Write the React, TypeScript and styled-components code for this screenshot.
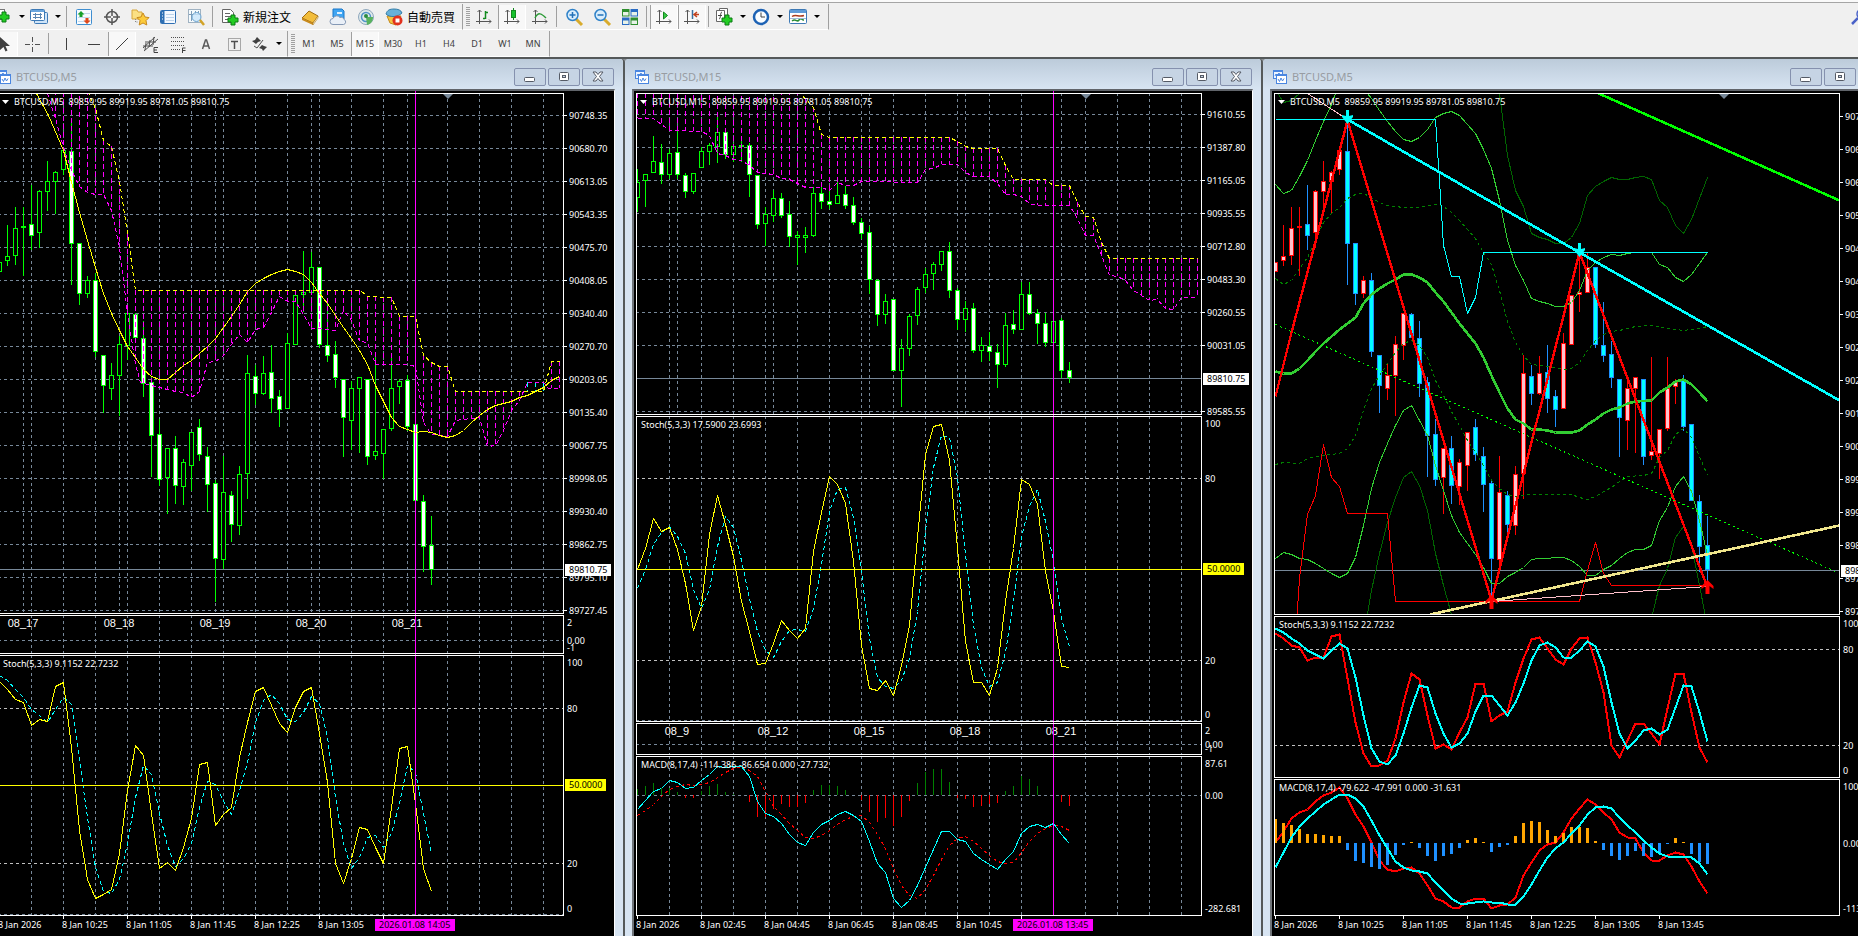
import React from "react";
import styled, { createGlobalStyle } from "styled-components";

/* ---------- shared styling ---------- */

const GlobalStyle = createGlobalStyle`
  *, *::before, *::after { box-sizing: border-box; }
  html, body { margin: 0; height: 100%; overflow: hidden; background: #ababab; }
  body { font-family: "Noto Sans", "Noto Sans CJK JP", sans-serif; }
`;

const C = {
  grid: "#778899",
  level: "#c0c0c0",
  lime: "#00ff00",
  yellow: "#ffff00",
  magenta: "#ff00ff",
  cyan: "#00ffff",
  red: "#ff0000",
  blue: "#1e90ff",
  pink: "#ffc0cb",
  limeGreen: "#32cd32",
  green: "#008000",
  darkGreen: "#006400",
  khaki: "#f0e68c",
  orange: "#ffa500",
};

const Shell = styled.div`
  display: flex;
  flex-direction: column;
  height: 100vh;
  overflow: hidden;
  background: #f0f0f0;
`;

const Toolbars = styled.header`
  display: flex;
  flex: none;
  flex-direction: column;
  gap: 1px;
  padding-top: 2px;
  border-top: 2px solid #fafafa;
  border-bottom: 2px solid #55595a;
  box-shadow: inset 0 1px 0 #a5a5a5;
`;

const Row = styled.div`
  display: flex;
  justify-content: space-between;
  height: 26px;
`;

const Tools = styled.div`
  display: flex;
  align-items: center;
`;

const Bar = styled.div<{ $cut?: number; $padEnd?: number }>`
  display: flex;
  align-items: center;
  height: 26px;
  margin-left: ${(p) => -(p.$cut ?? 0)}px;
  padding-right: ${(p) => p.$padEnd ?? 2}px;
  border-right: 1px solid #a0a0a0;
  border-bottom: 1px solid #fff;
`;

const Grip = styled.span`
  width: 4px;
  height: 20px;
  margin: 0 0 0 3px;
  background: repeating-linear-gradient(#a0a0a0 0 1px, #f0f0f0 1px 2px);
`;

const Sep = styled.span`
  width: 1px;
  height: 21px;
  margin: 0 3px 0 2px;
  background: #a0a0a0;
`;

const Btn = styled.button<{ $on?: boolean; $w?: number }>`
  display: inline-flex;
  align-items: center;
  justify-content: center;
  gap: 4px;
  flex: none;
  width: ${(p) => p.$w ?? 28}px;
  height: 24px;
  padding: 0;
  border: 0;
  background: ${(p) => (p.$on ? "#f8f8f8" : "transparent")};
  box-shadow: ${(p) => (p.$on ? "inset 2px 1px 0 -1px #a0a0a0, inset -2px -1px 0 -1px #fff" : "none")};
  color: #404040;
  font: 9px/12px "Noto Sans", sans-serif;
`;

const WideBtn = styled(Btn)`
  width: auto;
  padding: 0 5px;
  color: #000;
  font: 12px/16px "Noto Sans CJK JP", sans-serif;
`;

const SearchBtn = styled(Btn)`
  margin-right: -16px;
`;

const Icon = styled.svg`
  flex: none;
  width: 18px;
  height: 18px;
  overflow: visible;
`;

const Caret = styled.span`
  width: 0;
  height: 0;
  margin-left: 3px;
  border: 3px solid transparent;
  border-top-color: #000;
  border-bottom: 0;
`;

/* ---------- toolbar icons ---------- */

const Plus = ({ x, y }: { x: number; y: number }) => (
  <path d={`M${x + 3} ${y}h4v3h3v4h-3v3h-4v-3h-3v-4h3z`} fill="#22cc22" stroke="#0a7a14" strokeWidth="1" />
);

const NewChartIcon = () => (
  <Icon viewBox="0 0 18 18">
    <rect x="1.500" y="1.500" width="9" height="10" fill="#fff" stroke="#777" />
    <Plus x={5} y={4} />
  </Icon>
);
const ProfilesIcon = () => (
  <Icon viewBox="0 0 18 18">
    <rect x="4.500" y="4.500" width="13" height="11" rx="1" fill="#cfe4f8" stroke="#3d79b5" />
    <rect x="0.500" y="1.500" width="14" height="11" rx="1" fill="#fff" stroke="#3d79b5" />
    <path d="M1 2h13v2H1z" fill="#6aa5dd" />
    <path d="M3 9.500h9M5.500 5v6M10.500 5v6M3 6.500h9" stroke="#5b86b3" fill="none" />
  </Icon>
);
const MarketIcon = () => (
  <Icon viewBox="0 0 18 18">
    <rect x="1.500" y="1.500" width="15" height="15" rx="1" fill="#f6fbff" stroke="#3f8ed0" />
    <path d="M3 5.500h12M3 9.500h12M3 13.500h12" stroke="#c3d9ec" />
    <path d="M6 3l3.500 3.500H7.500V9h-3V6.500H2.500z" fill="#16a02a" />
    <path d="M12 16l3.500-3.500H13.500V10h-3v2.500H8.500z" fill="#e0481a" />
  </Icon>
);
const DataIcon = () => (
  <Icon viewBox="0 0 18 18">
    <circle cx="9" cy="9" r="5.500" fill="none" stroke="#555" strokeWidth="1.500" />
    <path d="M9 1v7M9 10v7M1 9h7M10 9h7" stroke="#555" strokeWidth="1.500" />
  </Icon>
);
const StarFolderIcon = () => (
  <Icon viewBox="0 0 18 18">
    <path d="M1 2h5l1 2h4v7H1z" fill="#fbe083" stroke="#d7a63c" />
    <path d="M4.500 11v3h3" stroke="#888" fill="none" strokeDasharray="1 1" />
    <path d="M12 5l2 4 4 .6-3 3 .8 4.400L12 15l-3.800 2 .8-4.400-3-3L10 9z" fill="#fccb3c" stroke="#c88a1d" />
  </Icon>
);
const NavigatorIcon = () => (
  <Icon viewBox="0 0 18 18">
    <rect x="1.500" y="2.500" width="15" height="13" rx="1" fill="#f4f9ff" stroke="#2e6fb3" />
    <path d="M2 3h3.500v12H2z" fill="#2e6fb3" />
    <path d="M3 5h1M3 8h1M3 11h1" stroke="#fff" />
    <path d="M7 6.500h8M7 9.500h8M7 12.500h8" stroke="#bcd3ea" />
  </Icon>
);
const TesterIcon = () => (
  <Icon viewBox="0 0 18 18">
    <rect x="1.500" y="1.500" width="12" height="13" fill="#f5fafd" stroke="#9fb2c2" />
    <path d="M4.500 3v10M8.500 3v4M11.500 3v4M2 6.500h11" stroke="#7e9cb8" />
    <circle cx="9.500" cy="9" r="4.500" fill="#cbe6fb" fillOpacity="0.800" stroke="#6ba3cf" />
    <path d="M13 12l4 5" stroke="#d2a327" strokeWidth="2.500" />
  </Icon>
);
const OrderIcon = () => (
  <Icon viewBox="0 0 18 18">
    <path d="M1.500 1.500h8l3 3v10h-11z" fill="#fff" stroke="#666" />
    <path d="M4 5.500h5M4 8.500h6M4 11.500h4" stroke="#666" />
    <Plus x={7} y={7} />
  </Icon>
);
const BookIcon = () => (
  <Icon viewBox="0 0 18 18">
    <path d="M8 3l9 5-5 7L1 10z" fill="#f2bd3b" stroke="#a06c12" />
    <path d="M1 10l11 5v2L1 12z" fill="#c98a1b" />
    <path d="M12 15l5-7v2l-5 7z" fill="#fff2c4" stroke="#a06c12" strokeWidth="0.500" />
  </Icon>
);
const HostingIcon = () => (
  <Icon viewBox="0 0 18 18">
    <path d="M4 1h9l2 2v8H6l-2-2z" fill="#3fa5f3" stroke="#1a76c7" />
    <path d="M8 4h5v2H8z" fill="#dff1ff" />
    <path d="M4 16.500a3 3 0 0 1 0-6 4 4 0 0 1 7-1 3 3 0 0 1 4 2 2.600 2.600 0 0 1-.5 5z" fill="#e9eff7" stroke="#8498b5" />
  </Icon>
);
const SignalIcon = () => (
  <Icon viewBox="0 0 18 18">
    <circle cx="9" cy="9" r="7.500" fill="#dfe9ea" stroke="#8fa8bd" />
    <circle cx="9" cy="9" r="4.500" fill="none" stroke="#4f94c8" strokeWidth="1.500" />
    <path d="M9 9l1 8c4-1 6-4 6-8" fill="#58b25f" />
    <circle cx="9" cy="8" r="2" fill="#2b8c41" />
  </Icon>
);
const AutoIcon = () => (
  <Icon viewBox="0 0 18 18">
    <path d="M2 8l3 7 6 2 5-9z" fill="#f5c443" stroke="#c4891b" />
    <path d="M1 6c1-4 4-5 8-5s7 1 8 4c-4 4-12 5-16 1z" fill="#66b1da" stroke="#367ea8" />
    <circle cx="12.500" cy="12.500" r="5" fill="#e2311d" />
    <path d="M10.500 10.500h4v4h-4z" fill="#fff" />
  </Icon>
);
const Axes = () => <path d="M4.500 2v14M1 13.500h15M2.500 4l2-2 2 2M14 11.500l2 2-2 2" stroke="#555" fill="none" />;
const BarsIcon = () => (
  <Icon viewBox="0 0 18 18">
    <Axes />
    <path d="M10.500 3v8M10 10.500H8M11 4.500h2" stroke="#128a1e" strokeWidth="1.500" />
  </Icon>
);
const CandleIcon = () => (
  <Icon viewBox="0 0 18 18">
    <Axes />
    <path d="M10.500 0v12" stroke="#128a1e" />
    <rect x="8.500" y="2.500" width="4" height="7" fill="#16c22c" stroke="#128a1e" />
  </Icon>
);
const LineIcon = () => (
  <Icon viewBox="0 0 18 18">
    <Axes />
    <path d="M4 10c3-6 6-5 11 0" stroke="#2a9a35" fill="none" strokeWidth="1.500" />
  </Icon>
);
const Lens = ({ plus }: { plus?: boolean }) => (
  <Icon viewBox="0 0 18 18">
    <path d="M11 11l6 6" stroke="#d8ab2c" strokeWidth="3" />
    <circle cx="7.500" cy="7" r="5.500" fill="#d8edfc" stroke="#2f82c9" strokeWidth="1.500" />
    <path d={plus ? "M4.500 7h6M7.500 4v6" : "M4.500 7h6"} stroke="#2271b8" strokeWidth="1.500" />
  </Icon>
);
const SearchIcon = () => (
  <Icon viewBox="0 0 18 18">
    <path d="M1 17l6-6" stroke="#4a62c8" strokeWidth="2.500" />
    <circle cx="11" cy="7" r="5" fill="#eef3ff" stroke="#4a62c8" strokeWidth="1.500" />
  </Icon>
);
const TileIcon = () => (
  <Icon viewBox="0 0 18 18">
    <path d="M1 1h7.500v7.500H1zM9.500 9.500H17V17H9.500z" fill="#2f8f2f" />
    <path d="M9.500 1H17v7.500H9.500zM1 9.500h7.500V17H1z" fill="#2a6cc4" />
    <path d="M2 4h5.500v3.500H2zM10.500 4H16v3.500h-5.500zM2 12.500h5.500V16H2zM10.500 12.500H16V16h-5.500z" fill="#e8f2e8" />
  </Icon>
);
const ScrollIcon = () => (
  <Icon viewBox="0 0 18 18">
    <Axes />
    <path d="M8.500 4v7l4-3.500z" fill="#35c843" stroke="#128a1e" />
  </Icon>
);
const ShiftIcon = () => (
  <Icon viewBox="0 0 18 18">
    <Axes />
    <path d="M9.500 2v9" stroke="#3a6f9f" strokeWidth="1.500" />
    <path d="M16 6.500h-4M14 4l-3 2.500 3 2.500" stroke="#c2401c" fill="none" strokeWidth="1.500" />
  </Icon>
);
const IndicatorIcon = () => (
  <Icon viewBox="0 0 18 18">
    <path d="M4.500 0.500h8v10h-8z" fill="#fff" stroke="#666" />
    <path d="M1.500 2.500h8v11h-8z" fill="#fff" stroke="#666" />
    <path d="M7 4c-2 0-1 7-3 7M3 7.500h4" stroke="#444" fill="none" />
    <Plus x={7} y={7} />
  </Icon>
);
const ClockIcon = () => (
  <Icon viewBox="0 0 18 18">
    <circle cx="9" cy="9" r="7" fill="#fafdff" stroke="#1d62b4" strokeWidth="2.500" />
    <path d="M9 4.500V9h4" stroke="#444" fill="none" />
  </Icon>
);
const TemplateIcon = () => (
  <Icon viewBox="0 0 18 18">
    <rect x="0.500" y="1.500" width="17" height="14" rx="1" fill="#fff" stroke="#3d79b5" />
    <path d="M1 2h16v3H1z" fill="#5d9bd8" />
    <path d="M3 8.500c4-3 6 1 12-1" stroke="#a93c20" fill="none" strokeWidth="1.500" />
    <path d="M3 13c4-3 5 2 7-1s3 0 5 0" stroke="#2a8d35" fill="none" strokeWidth="1.500" />
    <path d="M1 10.500h16" stroke="#9dbada" />
  </Icon>
);
const CursorIcon = () => (
  <Icon viewBox="0 0 18 18">
    <path d="M5 2v13l3.500-3 2 4.500 2-1-2-4.500H15z" fill="#404040" />
  </Icon>
);
const CrossIcon = () => (
  <Icon viewBox="0 0 18 18">
    <path d="M9.500 2v5M9.500 12v5M2 9.500h5M12 9.500h5M9 9.500h1" stroke="#505050" />
  </Icon>
);
const ShapeIcon = ({ d }: { d: string }) => (
  <Icon viewBox="0 0 18 18">
    <path d={d} stroke="#404040" fill="none" />
  </Icon>
);
const ChannelIcon = () => (
  <Icon viewBox="0 0 18 18">
    <path d="M2 13L14 2M3 16L17 4M5 8l-1 7M9 5l-1 7M13 2l-1 8M2 11h10M4 7h11" stroke="#505050" fill="none" />
    <path d="M17 12.500h-4v5h4M13 15h3" stroke="#404040" fill="none" />
  </Icon>
);
const FiboIcon = () => (
  <Icon viewBox="0 0 18 18">
    <path d="M2 2.500h14M2 6.500h14M2 10.500h14M2 14.500h9" stroke="#505050" strokeDasharray="1 1" />
    <path d="M16.500 13h-3v5M14 15.500h2.500" stroke="#404040" fill="none" />
  </Icon>
);
const TextIcon = () => (
  <Icon viewBox="0 0 18 18">
    <path d="M5.500 14l3-9h1l3 9M6.500 11h5" stroke="#5a5a5a" strokeWidth="1.500" fill="none" />
  </Icon>
);
const LabelIcon = () => (
  <Icon viewBox="0 0 18 18">
    <rect x="3.500" y="3.500" width="12" height="12" fill="none" stroke="#606060" strokeDasharray="1 1" />
    <path d="M6 6.500h7M9.500 6v8" stroke="#505050" strokeWidth="1.500" />
  </Icon>
);
const ArrowsIcon = () => (
  <Icon viewBox="0 0 18 18">
    <path d="M6 2l4 4-3 1-2 2-4-3 3-1zM12 16l4-4-3-1-2-1-3 3 3 1z" fill="#404040" />
    <path d="M3 11l3 2 6-8" stroke="#505050" fill="none" />
  </Icon>
);

/* ---------- chart windows ---------- */

const Desktop = styled.main`
  display: flex;
  flex: 1;
  min-height: 0;
  margin-left: -13px;
  overflow: hidden;
  background: #8a8f94;
`;

const Win = styled.section`
  display: flex;
  flex-direction: column;
  flex: 0 0 638px;
  border-right: 2px solid #55595a;
  border-radius: 4px 4px 0 0;
  background: #d7e4f2;
`;

const TitleBar = styled.div`
  display: flex;
  flex: none;
  align-items: center;
  height: 30px;
  padding: 8px 9px 2px 10px;
  border-radius: 4px 4px 0 0;
  background: linear-gradient(#bccbda, #d7e4f2);
`;

const Title = styled.h2`
  flex: 1;
  margin: 0 0 0 5px;
  color: #989ca2;
  font: 11px/16px "Noto Sans", sans-serif;
`;

const WinButtons = styled.div`
  display: flex;
  gap: 2px;
`;

const WinBtn = styled.button`
  display: flex;
  align-items: center;
  justify-content: center;
  width: 32px;
  height: 18px;
  padding: 0;
  border: 1px solid #8591ae;
  border-radius: 2px;
  background: #c6d4e4;
`;

const Client = styled.div`
  display: flex;
  flex-direction: column;
  flex: 1;
  margin: 0 8px 0 7px;
  border-top: 2px solid #60646a;
  border-left: 2px solid #70757a;
  border-right: 1px solid #fff;
  background: #000;
`;

const Svg = styled.svg`
  display: block;
  flex: none;
  font: 9px "Noto Sans", sans-serif;
  fill: #fff;
`;

const HourText = styled.text`
  font: 11px "Liberation Sans", sans-serif;
`;

const LEFT = -4;
const WIDTH = 618;
const PLOT_L = -2;
const PLOT_R = 563;
const STEP = 8;
const bar = (i: number) => i * STEP - 1;

type Pt = [number, number];
type Scale = { y0: number; k: number };
type Candle = [number, number, number, number, number];

const toPoints = (pts: Pt[]) => pts.map(([x, y]) => `${x + 0.5},${Math.round(y) + 0.5}`).join(" ");
const ofIndex = (pts: Pt[], s: Scale = { y0: 0, k: 1 }): Pt[] => pts.map(([i, v]) => [bar(i), s.y0 + v / s.k]);
const ofValues = (v: number[], s: Scale): Pt[] => v.map((n, i) => [bar(i), s.y0 + n / s.k]);

const yAt = (pts: Pt[], x: number) => {
  for (let n = 1; n < pts.length; n++) {
    const [x0, y0] = pts[n - 1];
    const [x1, y1] = pts[n];
    if (x >= x0 && x <= x1) return y0 + ((y1 - y0) * (x - x0)) / (x1 - x0);
  }
  return null;
};

type LineProps = { pts: Pt[]; color: string; dash?: string; w?: number };
const Line = ({ pts, color, dash, w = 1 }: LineProps) => (
  <polyline
    points={toPoints(pts)}
    fill="none"
    stroke={color}
    strokeWidth={w}
    strokeDasharray={dash}
    strokeLinejoin="round"
    shapeRendering="crispEdges"
  />
);

const VLine = ({ x, top, bottom, color = C.grid, dash = "3 3", w = 1 }: any) => (
  <path d={`M${x + 0.5} ${top}V${bottom}`} stroke={color} strokeDasharray={dash} strokeWidth={w} shapeRendering="crispEdges" />
);
const HLine = ({ y, color = C.grid, dash = "3 3" }: { y: number; color?: string; dash?: string }) => (
  <path d={`M${PLOT_L} ${y + 0.5}H${PLOT_R}`} stroke={color} strokeDasharray={dash} shapeRendering="crispEdges" />
);

const gridX = Array.from({ length: 17 }, (_, n) => 31 + n * 32);

type Label = { y: number; text: string; near?: boolean };
type PaneProps = {
  id: string;
  y: number;
  h: number;
  top: number;
  bottom: number;
  grid?: boolean;
  cursor?: boolean;
  labels: Label[];
  title?: string;
  flag?: { y: number; text: string; color: string };
  children?: React.ReactNode;
};

const Pane = ({ id, y, h, top, bottom, grid, cursor, labels, title, flag, children }: PaneProps) => (
  <Svg width={WIDTH} height={h} viewBox={`${LEFT} ${y} ${WIDTH} ${h}`} role="img" aria-label={title ?? id}>
    <defs>
      <clipPath id={id}>
        <rect x={PLOT_L} y={top} width={PLOT_R - PLOT_L} height={bottom - top} />
      </clipPath>
    </defs>
    <g clipPath={`url(#${id})`}>
      {grid && gridX.map((x) => <VLine key={x} x={x} top={top} bottom={bottom} />)}
      {children}
    </g>
    {cursor && <VLine x={415} top={y} bottom={y + h} color={C.magenta} dash="none" />}
    <rect
      x={PLOT_L + 0.5}
      y={top + 0.5}
      width={PLOT_R - PLOT_L}
      height={bottom - top}
      fill="none"
      stroke="#fff"
      shapeRendering="crispEdges"
    />
    {labels.map((l) => (
      <g key={l.text + l.y}>
        {!l.near && <path d={`M563 ${l.y + 0.5}h4`} stroke="#fff" />}
        <text x={l.near ? 567 : 569} y={l.y + 4}>
          {l.text}
        </text>
      </g>
    ))}
    {flag && (
      <g>
        <rect x="565" y={flag.y - 6} width={flag.color === "#fff" ? 46 : 41} height="12" fill={flag.color} />
        <text x="569" y={flag.y + 3} fill="#000">
          {flag.text}
        </text>
      </g>
    )}
    {title && (
      <text x="3" y={top + 12}>
        {title}
      </text>
    )}
  </Svg>
);

const TimeAxis = ({ times, flag }: { times: string[]; flag?: string }) => (
  <Svg width={WIDTH} height={20} viewBox={`${LEFT} 916 ${WIDTH} 20`}>
    {times.map((t, n) => (
      <g key={t}>
        <path d={`M${n * 64 - 0.5} 916v3`} stroke="#fff" />
        <text x={n * 64 - 2} y="928">
          {t}
        </text>
      </g>
    ))}
    {flag && (
      <g>
        <path d="M383.500 916v3" stroke="#fff" />
        <rect x="375" y="919" width="80" height="12" fill={C.magenta} />
        <text x="379" y="928" fill="#000">
          {flag}
        </text>
      </g>
    )}
  </Svg>
);

const ChartHeading = ({ text }: { text: string }) => (
  <g>
    <path d="M443 94h10l-5 5z" fill={C.grid} />
    <path d="M2 100h7l-3.500 4z" fill="#fff" />
    <text x="14" y="105">
      {text}
    </text>
  </g>
);

type CandlesProps = { data: Candle[]; s?: Scale; up: [string, string]; down: [string, string] };
const Candles = ({ data, s = { y0: 0, k: 1 }, up, down }: CandlesProps) => (
  <g shapeRendering="crispEdges">
    {data.map(([hi, lo, a, b, bear], i) => {
      const [stroke, fill] = bear ? down : up;
      const f = (v: number) => Math.round(s.y0 + v / s.k);
      return (
        <g key={i} stroke={stroke}>
          <path d={`M${bar(i) + 0.5} ${f(hi)}V${f(lo)}`} />
          <rect x={bar(i) - 1.5} y={f(a) + 0.5} width="4" height={Math.max(1, f(b) - f(a) - 1)} fill={fill} />
        </g>
      );
    })}
  </g>
);

const Cloud = ({ upper, lower }: { upper: Pt[]; lower: Pt[] }) => (
  <g>
    {Array.from({ length: 71 }, (_, i) => {
      const a = yAt(upper, bar(i));
      const b = yAt(lower, bar(i));
      if (a === null || b === null) return null;
      return (
        <VLine key={i} x={bar(i)} top={Math.min(a, b)} bottom={Math.max(a, b)} color={b < a ? C.cyan : C.magenta} dash="5 3" />
      );
    })}
    <Line pts={lower} color={C.magenta} dash="4 3" />
    <Line pts={upper} color={C.yellow} dash="4 3" />
  </g>
);

const Bars = ({ v, base, s, up, down, w = 1 }: { v: number[]; base: number; s: Scale; up: string; down: string; w?: number }) => (
  <g>
    {v.map((n, i) => (
      <VLine key={i} x={bar(i)} top={s.y0 + base / s.k} bottom={s.y0 + n / s.k} color={n < base ? up : down} dash="none" w={w} />
    ))}
  </g>
);

/* ---------- series ---------- */

/* each candle: high, low, body top, body bottom, falling */
const m5Candles: Candle[] = [
  [262, 272, 262, 272, 0], [225, 266, 256, 261, 0], [207, 265, 228, 256, 0], [207, 276, 226, 228, 0], [185, 250, 224, 236, 1],
  [190, 248, 191, 233, 0], [161, 211, 181, 192, 0], [171, 214, 172, 182, 0], [148, 175, 150, 170, 0], [122, 285, 151, 244, 1],
  [243, 305, 243, 294, 1], [276, 298, 280, 294, 0], [273, 357, 280, 352, 1], [355, 413, 355, 386, 1], [363, 400, 375, 389, 0],
  [336, 416, 344, 376, 0], [313, 360, 313, 346, 0], [313, 338, 314, 338, 1], [321, 397, 338, 384, 1], [377, 477, 382, 436, 1],
  [419, 486, 434, 480, 1], [448, 514, 448, 478, 0], [436, 504, 448, 486, 1], [459, 505, 462, 487, 0], [432, 491, 432, 466, 0],
  [419, 461, 427, 455, 1], [447, 512, 456, 485, 1], [480, 602, 483, 559, 1], [456, 569, 492, 560, 0], [491, 542, 495, 525, 1],
  [466, 535, 474, 526, 0], [355, 499, 373, 474, 0], [365, 405, 376, 394, 1], [356, 395, 373, 394, 0], [345, 413, 372, 399, 1],
  [390, 427, 396, 410, 1], [333, 409, 343, 409, 0], [295, 345, 295, 345, 0], [251, 312, 292, 295, 0], [252, 293, 267, 293, 0],
  [267, 348, 267, 345, 1], [302, 362, 345, 356, 1], [341, 388, 354, 378, 1], [379, 457, 379, 418, 1], [381, 450, 388, 421, 0],
  [377, 453, 377, 389, 0], [379, 465, 379, 457, 1], [357, 460, 451, 456, 0], [429, 479, 429, 454, 0], [357, 431, 388, 429, 0],
  [379, 404, 381, 387, 0], [375, 431, 380, 427, 1], [424, 501, 424, 501, 1], [495, 572, 501, 547, 1], [516, 585, 545, 570, 1],
];

const m5Average: Pt[] = [
  [36, 93], [48, 115], [63, 150], [71, 182], [79, 212], [87, 240], [95, 267], [103, 293], [111, 313], [119, 330], [127, 346],
  [135, 357], [143, 369], [151, 376], [159, 379], [167, 379], [175, 372], [183, 365], [191, 360], [199, 353], [207, 346], [215, 338],
  [223, 327], [231, 316], [239, 304], [247, 291], [255, 283], [263, 278], [271, 274], [279, 271], [287, 269], [295, 271], [303, 274],
  [311, 282], [319, 293], [327, 303], [335, 315], [343, 327], [351, 338], [359, 350], [367, 364], [375, 385], [383, 401], [391, 417],
  [399, 426], [407, 429], [415, 432], [423, 431], [431, 432], [439, 435], [447, 437], [455, 435], [463, 430], [471, 422], [479, 415],
  [487, 409], [495, 405], [503, 403], [511, 401], [519, 397], [527, 395], [535, 391], [543, 387], [551, 380], [559, 376],
];

const m5Upper: Pt[] = [
  [47, 80], [87, 90], [95, 108], [103, 140], [111, 146], [119, 181], [127, 233], [135, 290], [360, 290], [367, 296], [391, 297],
  [399, 316], [415, 316], [423, 355], [431, 362], [439, 366], [447, 366], [455, 391], [543, 391], [551, 361], [559, 361],
];
const m5Lower: Pt[] = [
  [47, 93], [55, 118], [63, 147], [71, 170], [79, 186], [87, 192], [95, 194], [103, 194], [111, 210], [119, 247], [127, 313],
  [135, 364], [140, 382], [147, 384], [159, 387], [167, 389], [175, 391], [183, 392], [191, 397], [199, 391], [207, 362], [215, 361],
  [223, 355], [231, 344], [239, 334], [247, 342], [255, 329], [263, 327], [271, 312], [279, 296], [287, 301], [295, 301], [303, 314],
  [311, 328], [319, 328], [327, 329], [335, 330], [343, 310], [351, 320], [359, 341], [367, 342], [375, 364], [407, 364], [415, 366],
  [423, 422], [431, 434], [447, 436], [455, 420], [479, 417], [487, 446], [495, 445], [503, 430], [511, 410], [519, 400], [527, 382],
  [543, 382], [548, 388], [559, 388],
];

const third = (y0: number): Scale => ({ y0, k: 3 });

const m5Stoch = [
  92, 118, 148, 157, 225, 208, 212, 108, 95, 290, 540, 688, 745, 732, 718, 610, 420, 286, 315, 490, 655, 635, 661, 590, 505, 341, 335,
  525, 492, 472, 320, 215, 123, 110, 165, 220, 247, 170, 122, 112, 250, 395, 640, 700, 625, 532, 537, 590, 638, 470, 293, 287, 460,
  655, 722,
];
const m5StochSignal = [
  75, 90, 118, 140, 178, 195, 216, 178, 140, 162, 330, 500, 650, 722, 730, 688, 580, 440, 345, 372, 488, 585, 648, 625, 580, 470, 392,
  402, 452, 493, 420, 335, 215, 150, 133, 158, 208, 214, 185, 138, 160, 260, 440, 580, 655, 620, 560, 555, 590, 550, 460, 345, 365,
  490, 610,
];

const m15Candles: Candle[] = [
  [342, 470, 380, 430, 0], [356, 455, 356, 379, 0], [243, 355, 319, 353, 0], [267, 386, 320, 359, 1], [283, 372, 295, 359, 0],
  [228, 372, 290, 359, 1], [355, 428, 361, 410, 1], [355, 418, 355, 410, 0], [277, 340, 289, 338, 0], [265, 330, 271, 290, 0],
  [180, 323, 232, 276, 0], [228, 311, 232, 301, 1], [265, 322, 274, 301, 0], [250, 322, 271, 275, 0], [265, 426, 271, 361, 1],
  [361, 522, 361, 509, 1], [455, 572, 478, 506, 0], [405, 502, 430, 482, 0], [415, 488, 430, 482, 1], [438, 576, 478, 545, 1],
  [527, 630, 541, 548, 0], [515, 593, 541, 548, 0], [395, 546, 415, 542, 0], [395, 461, 415, 440, 1], [400, 462, 439, 449, 1],
  [380, 446, 421, 446, 0], [393, 461, 418, 452, 1], [427, 509, 451, 503, 1], [488, 553, 502, 536, 1], [514, 718, 532, 674, 1],
  [672, 812, 674, 781, 1], [717, 806, 737, 779, 0], [733, 947, 733, 947, 1], [852, 1055, 880, 947, 0], [777, 902, 782, 881, 0],
  [697, 809, 703, 782, 0], [638, 715, 658, 700, 0], [620, 706, 626, 658, 0], [589, 648, 589, 629, 0], [561, 730, 589, 707, 1],
  [700, 826, 706, 794, 1], [737, 830, 760, 794, 0], [743, 893, 760, 887, 1], [845, 921, 871, 887, 0], [830, 917, 874, 892, 1],
  [867, 998, 892, 929, 1], [774, 936, 811, 929, 0], [765, 838, 808, 824, 1], [680, 824, 718, 824, 0], [681, 780, 718, 776, 1],
  [762, 867, 775, 806, 1], [774, 876, 805, 863, 1], [798, 863, 798, 863, 0], [790, 968, 796, 947, 1], [921, 983, 946, 970, 1],
];

const m15Upper: Pt[] = [
  [0, 90], [20, 105], [22, 155], [23, 238], [24, 247], [39, 247], [40, 257], [41, 272], [42, 280], [45, 280], [46, 330], [47, 371],
  [51, 371], [52, 391], [54, 391], [55, 440], [56, 484], [57, 487], [58, 560], [59, 610], [70, 610],
];
const m15Lower: Pt[] = [
  [0, 190], [2, 190], [4, 226], [8, 228], [9, 240], [10, 295], [11, 300], [12, 313], [13, 315], [14, 330], [15, 350], [17, 357],
  [18, 368], [19, 371], [20, 385], [21, 397], [23, 397], [24, 405], [25, 380], [26, 390], [27, 390], [28, 377], [31, 377], [33, 382],
  [35, 380], [36, 343], [37, 340], [38, 328], [40, 328], [41, 350], [42, 363], [44, 364], [45, 385], [46, 418], [47, 418], [48, 424],
  [49, 445], [50, 451], [54, 451], [55, 490], [56, 541], [57, 541], [58, 600], [59, 660], [60, 664], [61, 674], [62, 705], [64, 736],
  [65, 733], [66, 758], [67, 762], [68, 727], [70, 727],
];

const m15Scale: Scale = { y0: 410, k: 2.981 };
const m15Stoch = [
  475, 410, 323, 362, 348, 415, 515, 657, 585, 370, 254, 340, 435, 570, 660, 758, 754, 695, 627, 655, 681, 650, 420, 305, 196, 222,
  278, 450, 700, 830, 836, 806, 851, 760, 640, 380, 130, 48, 43, 150, 410, 690, 811, 812, 850, 770, 570, 410, 205, 220, 280, 480, 600,
  764, 767,
];
const m15StochSignal = [
  530, 475, 400, 365, 346, 375, 425, 535, 590, 535, 405, 315, 350, 448, 560, 660, 715, 735, 690, 655, 653, 660, 590, 460, 300, 235,
  230, 320, 480, 680, 795, 822, 830, 806, 740, 600, 360, 170, 75, 80, 200, 430, 640, 765, 822, 810, 720, 570, 375, 285, 235, 330, 450,
  620, 705,
];
const m15Macd = [
  1190, 1163, 1135, 1127, 1104, 1108, 1128, 1125, 1104, 1085, 1060, 1064, 1062, 1060, 1090, 1165, 1200, 1210, 1232, 1265, 1287, 1296,
  1258, 1233, 1222, 1203, 1196, 1206, 1225, 1285, 1350, 1378, 1455, 1482, 1462, 1415, 1362, 1308, 1256, 1256, 1279, 1284, 1322, 1338,
  1353, 1368, 1337, 1316, 1260, 1241, 1233, 1243, 1232, 1264, 1290,
];
const m15MacdSignal = [
  1208, 1193, 1174, 1150, 1130, 1120, 1116, 1117, 1115, 1110, 1093, 1080, 1066, 1062, 1072, 1090, 1135, 1180, 1205, 1230, 1253, 1272,
  1277, 1268, 1252, 1235, 1218, 1209, 1208, 1227, 1265, 1305, 1365, 1415, 1445, 1455, 1428, 1385, 1338, 1298, 1277, 1270, 1284, 1305,
  1327, 1343, 1350, 1346, 1318, 1286, 1262, 1247, 1236, 1240, 1253,
];
const m15Hist = [
  1130, 1121, 1111, 1127, 1127, 1138, 1157, 1157, 1137, 1121, 1115, 1139, 1146, 1149, 1168, 1213, 1214, 1188, 1176, 1183, 1184, 1171,
  1133, 1118, 1118, 1121, 1132, 1149, 1162, 1197, 1228, 1215, 1240, 1213, 1165, 1112, 1079, 1070, 1070, 1109, 1157, 1160, 1183, 1180,
  1175, 1172, 1137, 1121, 1090, 1100, 1121, 1147, 1149, 1169, 1180,
];

const bandMid: Pt[] = [
  [0, 371], [1, 373], [2, 373], [3, 368], [4, 360], [5, 351], [6, 343], [7, 336], [8, 329], [9, 323], [10, 317], [11, 303], [12, 294],
  [13, 288], [14, 283], [15, 279], [16, 274], [17, 274], [18, 277], [19, 282], [20, 292], [21, 301], [22, 312], [23, 323], [24, 333],
  [25, 343], [26, 357], [27, 375], [28, 392], [29, 408], [30, 419], [31, 423], [32, 429], [33, 429], [34, 430], [35, 432], [37, 432],
  [38, 430], [39, 424], [40, 419], [41, 413], [42, 409], [43, 407], [44, 403], [45, 401], [47, 400], [48, 392], [49, 387], [50, 381],
  [51, 379], [52, 384], [53, 392], [54, 401],
];
const bandTop1: Pt[] = [[0, 184], [1, 193], [2, 190], [3, 176], [4, 160], [5, 140], [6, 121], [7, 104], [7.5, 93]];
const bandTop2: Pt[] = [
  [11.500, 93], [12, 98], [13, 110], [14, 121], [15, 131], [16, 139], [17, 141], [18, 137], [19, 129], [20, 117], [21, 113], [22, 111],
  [23, 115], [24, 124], [25, 133], [26, 149], [27, 168], [28, 200], [29, 240], [30, 265], [31, 280], [32, 298], [33, 301], [34, 303],
  [35, 306], [36, 306], [37, 302], [38, 290], [39, 270], [40, 262], [41, 257], [42, 254], [43, 255], [44, 253], [45, 252], [47, 252],
  [48, 264], [49, 267], [50, 277], [51, 281], [52, 274], [53, 263], [54, 252],
];
const outerTop: Pt[] = [
  [28, 93], [29, 155], [30, 190], [31, 206], [32, 233], [33, 237], [34, 239], [35, 243], [36, 243], [37, 237], [38, 223], [39, 195],
  [40, 186], [41, 181], [42, 177], [43, 179], [44, 179], [45, 177], [46, 176], [47, 179], [48, 200], [49, 207], [50, 225], [51, 233],
  [52, 219], [53, 198], [54, 177],
];
const innerTop: Pt[] = [
  [0, 278], [1, 284], [2, 280], [3, 268], [4, 257], [5, 240], [6, 222], [7, 213], [8, 207], [9, 198], [10, 194], [11, 193], [12, 197],
  [13, 202], [14, 205], [16, 207], [18, 207], [20, 204], [21, 206], [22, 212], [23, 220], [24, 229], [25, 238], [26, 252], [27, 264],
  [28, 290], [29, 321], [30, 342], [31, 355], [32, 364], [34, 366], [36, 369], [37, 368], [38, 362], [39, 350], [40, 340], [41, 334],
  [42, 331], [43, 330], [45, 326], [47, 325], [49, 328], [51, 330], [53, 328], [54, 326],
];
const innerBottom: Pt[] = [
  [0, 464], [1, 462], [3, 463], [4, 458], [6, 455], [8, 453], [9, 448], [10, 435], [11, 410], [12, 388], [13, 375], [14, 363],
  [15, 352], [16, 343], [17, 340], [18, 345], [19, 357], [20, 380], [21, 395], [22, 411], [23, 425], [24, 440], [25, 452], [26, 465],
  [27, 480], [28, 488], [29, 494], [30, 496], [32, 494], [37, 494], [38, 497], [39, 499], [40, 496], [41, 491], [42, 487], [43, 481],
  [44, 476], [46, 475], [47, 473], [48, 457], [49, 450], [50, 434], [51, 428], [52, 437], [53, 456], [54, 475],
];
const bandBottom: Pt[] = [
  [0, 558], [1, 552], [2, 554], [3, 558], [4, 559], [5, 563], [6, 568], [7, 573], [8, 577], [9, 573], [10, 557], [11, 525], [12, 488],
  [13, 462], [14, 443], [15, 425], [16, 410], [17, 405], [18, 420], [19, 435], [20, 465], [21, 490], [22, 515], [23, 532], [24, 543],
  [25, 554], [26, 567], [27, 583], [28, 583], [29, 576], [30, 572], [31, 567], [32, 559], [33, 558], [36, 557], [37, 560], [38, 566],
  [39, 575], [40, 575], [41, 569], [42, 565], [43, 558], [44, 552], [45, 549], [46, 549], [47, 545], [48, 520], [49, 507], [50, 486],
  [51, 476], [52, 491], [53, 520], [54, 555],
];
const outerBottom1: Pt[] = [
  [11.500, 614], [12, 590], [13, 553], [14, 522], [15, 497], [16, 477], [17, 471], [18, 485], [19, 510], [20, 553], [21, 585], [22, 614],
];
const outerBottom2: Pt[] = [[47.1, 614], [48, 585], [49, 568], [50, 537], [51, 526], [52, 545], [53, 585], [53.7, 614]];
const resistance: Pt[] = [
  [0, 119], [20, 119], [20.5, 180], [21, 245], [22, 276], [23, 276], [24, 313], [25, 297], [26, 252], [54, 252],
];
const support: Pt[] = [
  [2.7, 614], [3, 578], [4, 514], [5, 495], [6, 444], [7, 477], [8, 486], [9, 513], [14, 513], [15, 601], [38, 601], [39, 570],
  [40, 542], [41, 573], [42, 585], [54, 585],
];

const w3Stoch = [
  84, 98, 120, 125, 165, 156, 157, 94, 86, 220, 350, 445, 483, 480, 465, 400, 290, 204, 222, 330, 430, 416, 431, 382, 335, 234, 234,
  348, 330, 317, 230, 160, 103, 96, 130, 162, 178, 130, 99, 96, 170, 260, 420, 457, 405, 353, 354, 385, 417, 310, 204, 204, 320, 425,
  472,
];
const w3StochSignal = [
  70, 82, 98, 113, 136, 148, 159, 136, 113, 130, 215, 330, 430, 469, 477, 450, 385, 305, 240, 246, 325, 385, 427, 413, 383, 318, 270,
  270, 300, 330, 290, 235, 165, 120, 110, 125, 156, 156, 135, 109, 123, 183, 290, 385, 429, 405, 374, 369, 387, 372, 305, 240, 243,
  320, 407,
];
const w3Macd = [
  710, 678, 640, 621, 612, 588, 570, 560, 545, 580, 628, 662, 710, 765, 793, 798, 788, 787, 805, 840, 878, 888, 906, 906, 887, 879,
  879, 909, 899, 896, 875, 810, 770, 734, 718, 712, 680, 640, 610, 583, 598, 620, 643, 682, 696, 700, 740, 764, 765, 750, 740, 747,
  782, 828, 864,
];
const w3MacdSignal = [
  787, 740, 697, 662, 640, 617, 597, 583, 567, 567, 580, 603, 645, 690, 730, 769, 787, 794, 797, 805, 830, 855, 878, 895, 894, 892,
  887, 890, 891, 897, 897, 872, 838, 795, 755, 730, 712, 685, 660, 627, 606, 602, 609, 637, 660, 680, 705, 725, 743, 753, 752, 752,
  757, 775, 807,
];
const w3Hist = [
  642, 654, 660, 672, 687, 687, 690, 693, 693, 735, 768, 774, 786, 792, 780, 750, 720, 711, 729, 753, 768, 753, 747, 729, 705, 699,
  711, 741, 726, 720, 693, 654, 648, 651, 675, 693, 684, 666, 666, 669, 708, 735, 753, 765, 753, 738, 753, 756, 744, 717, 699, 711,
  747, 771, 777,
];

const m5Prices = [
  "90748.35", "90680.70", "90613.05", "90543.35", "90475.70", "90408.05", "90340.40", "90270.70", "90203.05", "90135.40", "90067.75",
  "89998.05", "89930.40", "89862.75", "89795.10", "89727.45",
];
const m15Prices = [
  "91610.55", "91387.80", "91165.05", "90935.55", "90712.80", "90483.30", "90260.55", "90031.05", "", "89585.55",
];
const priceLabels = (list: string[], first: number): Label[] =>
  list.map((text, n) => ({ text, y: first + n * 33 })).filter((l) => l.text !== "");

const quotes = "\u00a0\u00a089859.95 89919.95 89781.05 89810.75";
const m5Times = ["8 Jan 2026", "8 Jan 10:25", "8 Jan 11:05", "8 Jan 11:45", "8 Jan 12:25", "8 Jan 13:05"];
const m15Times = ["8 Jan 2026", "8 Jan 02:45", "8 Jan 04:45", "8 Jan 06:45", "8 Jan 08:45", "8 Jan 10:45"];
const limeCandle: [string, string] = [C.lime, "#000"];
const whiteCandle: [string, string] = [C.lime, "#fff"];

const DownArrow = ({ i, y }: { i: number; y: number }) => (
  <path transform={`translate(${bar(i)} ${y})`} d="M-1-10h3v6l4-1v2L0.500 4-5-3v-2l4 1z" fill={C.cyan} />
);
const UpArrow = ({ i, y }: { i: number; y: number }) => (
  <path transform={`translate(${bar(i)} ${y})`} d="M-1.500 7h4v-8l4 3V-1L0.500-7-5.500-1v3l4-3z" fill={C.red} />
);

/* ---------- window frame ---------- */

const ChartWindow = ({ title, children }: { title: string; children: React.ReactNode }) => (
  <Win aria-label={title}>
    <TitleBar>
      <svg width="14" height="14" viewBox="0 0 14 14" aria-hidden="true">
        <rect x="0.500" y="0.500" width="9" height="8" fill="#eef5ff" stroke="#4a86e0" />
        <path d="M0 1.500h10M2 6l1-2 1 2 2-3 1 2" stroke="#4a86e0" fill="none" />
        <rect x="3.500" y="4.500" width="10" height="9" fill="#fff" stroke="#4a86e0" />
        <path d="M3 5.500h11M5 9l1.500 2.500L8 8l1.500 3L11 8.500" stroke="#4a86e0" fill="none" />
      </svg>
      <Title>{title}</Title>
      <WinButtons>
        <WinBtn aria-label="Minimize">
          <svg width="12" height="12" viewBox="0 0 12 12">
            <rect x="0.500" y="6.500" width="10" height="4" rx="1" fill="#fff" stroke="#555b66" />
          </svg>
        </WinBtn>
        <WinBtn aria-label="Maximize">
          <svg width="12" height="12" viewBox="0 0 12 12">
            <rect x="1.500" y="1.500" width="9" height="8" rx="1" fill="#fff" stroke="#555b66" />
            <rect x="4.500" y="4.500" width="3" height="2" fill="#c6d4e4" stroke="#555b66" />
          </svg>
        </WinBtn>
        <WinBtn aria-label="Close">
          <svg width="12" height="12" viewBox="0 0 12 12">
            <path d="M1 1h3l2 2.500L8 1h3L7.500 5.500 11 10H8L6 7.500 4 10H1l3.500-4.500z" fill="#fff" stroke="#555b66" />
          </svg>
        </WinBtn>
      </WinButtons>
    </TitleBar>
    <Client>{children}</Client>
  </Win>
);

const HourPane = ({ id, y, h, top, bottom, zero, hours, first }: any) => (
  <Pane
    id={id}
    y={y}
    h={h}
    top={top}
    bottom={bottom}
    grid
    cursor
    labels={[
      { y: top + 7, text: "2", near: true },
      { y: zero, text: "0.00", near: true },
      { y: bottom - 6, text: "-1", near: true },
    ]}
  >
    <HLine y={zero} />
    {hours.map((t: string, n: number) => (
      <HourText key={t} x={first + n * 96} y={top + 12} textAnchor="middle">
        {t}
      </HourText>
    ))}
  </Pane>
);

const LeftChart = () => (
  <ChartWindow title="BTCUSD,M5">
    <Pane id="m5p" y={91} h={523} top={93} bottom={613} grid cursor labels={priceLabels(m5Prices, 115)} flag={{ y: 570, text: "89810.75", color: "#fff" }}>
      {[23, 119, 215, 311, 407].map((x) => <VLine key={x} x={x} top={93} bottom={613} />)}
      {m5Prices.map((p, n) => <HLine key={p} y={115 + n * 33} />)}
      <HLine y={569} dash="none" />
      <Candles data={m5Candles} up={limeCandle} down={whiteCandle} />
      <Cloud upper={m5Upper} lower={m5Lower} />
      <Line pts={m5Average} color={C.yellow} />
      <ChartHeading text={`BTCUSD,M5${quotes}`} />
    </Pane>
    <HourPane id="m5h" y={614} h={40} top={615} bottom={653} zero={640} first={23} hours={["08_17", "08_18", "08_19", "08_20", "08_21"]} />
    <Pane
      id="m5s" y={654} h={262} top={655} bottom={915} grid cursor title="Stoch(5,3,3) 9.1152 22.7232"
      labels={[{ y: 662, text: "100", near: true }, { y: 708, text: "80", near: true }, { y: 863, text: "20", near: true }, { y: 908, text: "0", near: true }]}
      flag={{ y: 785, text: "50.0000", color: C.yellow }}
    >
      <HLine y={708} color={C.level} />
      <HLine y={863} color={C.level} />
      <HLine y={914} />
      <Line pts={ofValues(m5StochSignal, third(650))} color={C.cyan} dash="4 3" />
      <Line pts={ofValues(m5Stoch, third(650))} color={C.yellow} />
      <HLine y={785} color={C.yellow} dash="none" />
    </Pane>
    <TimeAxis times={m5Times} flag="2026.01.08 14:05" />
  </ChartWindow>
);

const MiddleChart = () => (
  <ChartWindow title="BTCUSD,M15">
    <Pane id="m15p" y={91} h={324} top={93} bottom={414} grid cursor labels={priceLabels(m15Prices, 114)} flag={{ y: 379, text: "89810.75", color: "#fff" }}>
      {[39, 135, 231, 327, 423].map((x) => <VLine key={x} x={x} top={93} bottom={414} />)}
      {m15Prices.map((p, n) => <HLine key={p} y={114 + n * 33} />)}
      <HLine y={378} dash="none" />
      <Candles data={m15Candles} s={third(55)} up={limeCandle} down={whiteCandle} />
      <Cloud upper={ofIndex(m15Upper, third(55))} lower={ofIndex(m15Lower, third(55))} />
      <ChartHeading text={`BTCUSD,M15${quotes}`} />
    </Pane>
    <Pane
      id="m15s" y={415} h={307} top={416} bottom={721} grid cursor title="Stoch(5,3,3) 17.5900 23.6993"
      labels={[{ y: 423, text: "100", near: true }, { y: 478, text: "80", near: true }, { y: 660, text: "20", near: true }, { y: 714, text: "0", near: true }]}
      flag={{ y: 569, text: "50.0000", color: C.yellow }}
    >
      <HLine y={478} color={C.level} />
      <HLine y={660} color={C.level} />
      <HLine y={720} />
      <Line pts={ofValues(m15StochSignal, m15Scale)} color={C.cyan} dash="4 3" />
      <Line pts={ofValues(m15Stoch, m15Scale)} color={C.yellow} />
      <HLine y={569} color={C.yellow} dash="none" />
    </Pane>
    <HourPane id="m15h" y={722} h={33} top={723} bottom={754} zero={744} first={39} hours={["08_9", "08_12", "08_15", "08_18", "08_21"]} />
    <Pane
      id="m15m" y={755} h={161} top={756} bottom={915} grid cursor title="MACD(8,17,4) -114.386 -86.654 0.000 -27.732"
      labels={[{ y: 763, text: "87.61", near: true }, { y: 795, text: "0.00", near: true }, { y: 908, text: "-282.681", near: true }]}
    >
      <HLine y={795} />
      <Bars v={m15Hist} base={1149} s={m15Scale} up={C.green} down={C.red} />
      <Line pts={ofValues(m15MacdSignal, m15Scale)} color={C.red} dash="3 3" />
      <Line pts={ofValues(m15Macd, m15Scale)} color={C.cyan} />
    </Pane>
    <TimeAxis times={m15Times} flag="2026.01.08 13:45" />
  </ChartWindow>
);

const RightChart = () => (
  <ChartWindow title="BTCUSD,M5">
    <Pane id="trp" y={91} h={524} top={93} bottom={614} labels={priceLabels(m5Prices, 116)} flag={{ y: 571, text: "89810.75", color: "#fff" }}>
      <HLine y={570} dash="none" />
      <Line pts={ofIndex([[0.3, 93], [1, 102], [2, 100], [3, 93]])} color={C.darkGreen} />
      <Line pts={ofIndex(outerTop)} color={C.darkGreen} />
      <Line pts={ofIndex(outerBottom1)} color={C.darkGreen} />
      <Line pts={ofIndex(outerBottom2)} color={C.darkGreen} />
      <Candles data={m5Candles} up={[C.red, C.pink]} down={[C.blue, C.cyan]} s={{ y0: 0.400, k: 1 }} />
      <Line pts={ofIndex(innerTop)} color={C.green} dash="3 3" />
      <Line pts={ofIndex(innerBottom)} color={C.green} dash="3 3" />
      <Line pts={ofIndex(bandTop1)} color={C.limeGreen} />
      <Line pts={ofIndex(bandTop2)} color={C.limeGreen} />
      <Line pts={ofIndex(bandBottom)} color={C.limeGreen} />
      <Line pts={ofIndex(bandMid)} color={C.limeGreen} w={2.6} />
      <Line pts={ofIndex(support)} color={C.red} />
      <Line pts={ofIndex(resistance)} color={C.cyan} />
      <Line pts={ofIndex([[0, 396], [2, 332], [9, 120], [27, 600], [38, 252], [54, 587]])} color={C.red} w={2.400} />
      <Line pts={ofIndex([[0, 324], [70, 571]])} color={C.lime} dash="2 3" />
      <Line pts={ofIndex([[40.4, 93], [70.5, 200]])} color={C.lime} w={2.6} />
      <Line pts={ofIndex([[19.3, 614], [70.5, 525]])} color={C.khaki} w={2.6} />
      <Line pts={ofIndex([[27, 601], [54, 586]])} color={C.pink} />
      <Line pts={ofIndex([[4, 93], [9, 119]])} color={C.pink} />
      <Line pts={ofIndex([[9, 119], [38, 252], [70.5, 400]])} color={C.cyan} w={2.6} />
      <DownArrow i={9} y={120} />
      <DownArrow i={38} y={253} />
      <UpArrow i={27} y={602} />
      <UpArrow i={54} y={587} />
      <ChartHeading text={`BTCUSD,M5${quotes}`} />
    </Pane>
    <Pane
      id="trs" y={615} h={163} top={616} bottom={777} title="Stoch(5,3,3) 9.1152 22.7232"
      labels={[{ y: 623, text: "100", near: true }, { y: 649, text: "80", near: true }, { y: 745, text: "20", near: true }, { y: 770, text: "0", near: true }]}
    >
      <HLine y={649} color={C.level} />
      <HLine y={745} color={C.level} />
      <Line pts={ofValues(w3Stoch, third(605))} color={C.red} w={2} />
      <Line pts={ofValues(w3StochSignal, third(605))} color={C.cyan} w={2} />
    </Pane>
    <Pane
      id="trm" y={778} h={138} top={779} bottom={915} title="MACD(8,17,4) -79.622 -47.991 0.000 -31.631"
      labels={[{ y: 786, text: "100.51", near: true }, { y: 843, text: "0.00", near: true }, { y: 908, text: "-113.27", near: true }]}
    >
      <Line pts={ofValues(w3Macd, third(605))} color={C.red} w={2} />
      <Bars v={w3Hist} base={714} s={third(605)} up={C.orange} down={C.blue} w={3} />
      <Line pts={ofValues(w3MacdSignal, third(605))} color={C.cyan} w={2} />
    </Pane>
    <TimeAxis times={[...m5Times, "8 Jan 13:45"]} />
  </ChartWindow>
);

/* ---------- page ---------- */

const frames = ["M1", "M5", "M15", "M30", "H1", "H4", "D1", "W1", "MN"];

export default function App() {
  return (
    <Shell>
      <GlobalStyle />
      <Toolbars>
        <Row>
          <Tools role="toolbar" aria-label="Standard">
            <Bar $cut={8}>
              <Btn $w={34} aria-label="New chart"><NewChartIcon /><Caret /></Btn>
              <Btn $w={38} aria-label="Profiles"><ProfilesIcon /><Caret /></Btn>
              <Sep />
              <Btn aria-label="Market watch"><MarketIcon /></Btn>
              <Btn aria-label="Data window"><DataIcon /></Btn>
              <Btn aria-label="Navigator"><StarFolderIcon /></Btn>
              <Btn aria-label="Terminal"><NavigatorIcon /></Btn>
              <Btn aria-label="Strategy tester"><TesterIcon /></Btn>
              <Sep />
              <WideBtn><OrderIcon />新規注文</WideBtn>
              <Btn aria-label="MetaEditor"><BookIcon /></Btn>
              <Btn aria-label="Hosting"><HostingIcon /></Btn>
              <Btn aria-label="Signals"><SignalIcon /></Btn>
              <WideBtn><AutoIcon />自動売買</WideBtn>
            </Bar>
            <Bar $padEnd={5}>
              <Grip />
              <Btn aria-label="Bar chart"><BarsIcon /></Btn>
              <Btn aria-label="Candlesticks" $on><CandleIcon /></Btn>
              <Btn aria-label="Line chart"><LineIcon /></Btn>
              <Sep />
              <Btn aria-label="Zoom in"><Lens plus /></Btn>
              <Btn aria-label="Zoom out"><Lens /></Btn>
              <Btn aria-label="Tile windows"><TileIcon /></Btn>
              <Sep />
              <Btn aria-label="Auto scroll" $on><ScrollIcon /></Btn>
              <Btn aria-label="Chart shift" $on><ShiftIcon /></Btn>
              <Sep />
              <Btn $w={37} aria-label="Indicators"><IndicatorIcon /><Caret /></Btn>
              <Btn $w={37} aria-label="Periods"><ClockIcon /><Caret /></Btn>
              <Btn $w={37} aria-label="Templates"><TemplateIcon /><Caret /></Btn>
            </Bar>
          </Tools>
          <SearchBtn aria-label="Search"><SearchIcon /></SearchBtn>
        </Row>
        <Row>
          <Tools role="toolbar" aria-label="Line studies">
            <Bar $cut={10}>
              <Btn aria-label="Cursor" $on><CursorIcon /></Btn>
              <Btn aria-label="Crosshair"><CrossIcon /></Btn>
              <Sep />
              <Btn aria-label="Vertical line"><ShapeIcon d="M9.500 3v12" /></Btn>
              <Btn aria-label="Horizontal line"><ShapeIcon d="M3 9.500h12" /></Btn>
              <Btn aria-label="Trendline" $on><ShapeIcon d="M3 15L15 3" /></Btn>
              <Btn aria-label="Equidistant channel"><ChannelIcon /></Btn>
              <Btn aria-label="Fibonacci retracement"><FiboIcon /></Btn>
              <Btn aria-label="Text"><TextIcon /></Btn>
              <Btn aria-label="Text label"><LabelIcon /></Btn>
              <Btn $w={37} aria-label="Arrows"><ArrowsIcon /><Caret /></Btn>
            </Bar>
            <Bar>
              <Grip />
              {frames.map((f) => (
                <Btn key={f} $on={f === "M15"}>{f}</Btn>
              ))}
            </Bar>
          </Tools>
        </Row>
      </Toolbars>
      <Desktop>
        <LeftChart />
        <MiddleChart />
        <RightChart />
      </Desktop>
    </Shell>
  );
}
